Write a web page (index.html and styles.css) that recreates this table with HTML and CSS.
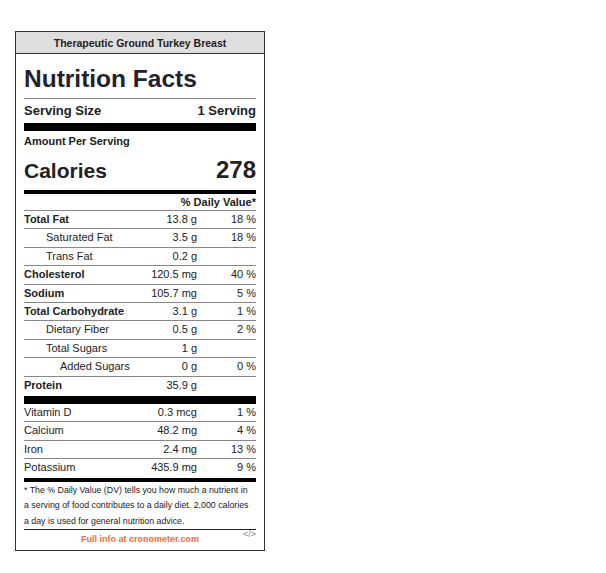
FILE: index.html
```html
<!DOCTYPE html>
<html>
<head>
<meta charset="utf-8">
<link rel="stylesheet" href="styles.css">
</head>
<body>
<div class="label">
  <div class="title">Therapeutic Ground Turkey Breast</div>
  <div class="inner">
    <div class="nf">Nutrition Facts</div>
    <div class="serving"><span>Serving Size</span><span>1 Serving</span></div>
    <div class="bar8"></div>
    <div class="aps">Amount Per Serving</div>
    <div class="cal"><span class="cal-l">Calories</span><span class="cal-v">278</span></div>
    <div class="bar4"></div>
    <div class="dvh">% Daily Value*</div>
    <div class="rows">
      <div class="row"><span class="n b">Total Fat</span><span class="a">13.8 g</span><span class="p">18 %</span></div>
      <div class="row"><span class="n i1">Saturated Fat</span><span class="a">3.5 g</span><span class="p">18 %</span></div>
      <div class="row"><span class="n i1">Trans Fat</span><span class="a">0.2 g</span><span class="p"></span></div>
      <div class="row"><span class="n b">Cholesterol</span><span class="a">120.5 mg</span><span class="p">40 %</span></div>
      <div class="row"><span class="n b">Sodium</span><span class="a">105.7 mg</span><span class="p">5 %</span></div>
      <div class="row"><span class="n b">Total Carbohydrate</span><span class="a">3.1 g</span><span class="p">1 %</span></div>
      <div class="row"><span class="n i1">Dietary Fiber</span><span class="a">0.5 g</span><span class="p">2 %</span></div>
      <div class="row"><span class="n i1">Total Sugars</span><span class="a">1 g</span><span class="p"></span></div>
      <div class="row"><span class="n i2">Added Sugars</span><span class="a">0 g</span><span class="p">0 %</span></div>
      <div class="row last"><span class="n b">Protein</span><span class="a">35.9 g</span><span class="p"></span></div>
    </div>
    <div class="bar8 mid"></div>
    <div class="rows minerals">
      <div class="row"><span class="n">Vitamin D</span><span class="a">0.3 mcg</span><span class="p">1 %</span></div>
      <div class="row"><span class="n">Calcium</span><span class="a">48.2 mg</span><span class="p">4 %</span></div>
      <div class="row"><span class="n">Iron</span><span class="a">2.4 mg</span><span class="p">13 %</span></div>
      <div class="row last"><span class="n">Potassium</span><span class="a">435.9 mg</span><span class="p">9 %</span></div>
    </div>
    <div class="bar4"></div>
    <div class="note">* The % Daily Value (DV) tells you how much a nutrient in a serving of food contributes to a daily diet. 2,000 calories a day is used for general nutrition advice.</div>
    <div class="foot"><span class="link">Full info at cronometer.com</span><span class="code">&lt;/&gt;</span></div>
  </div>
</div>
</body>
</html>
```
FILE: styles.css
```css
html, body { margin: 0; padding: 0; background: #fff; }
body { padding: 31px 0 0 15px; font-family: "Liberation Sans", Arial, sans-serif; color: #222; }
.label {
  width: 248px;
  border: 1px solid #333;
  box-sizing: content-box;
}
.title {
  background: #dedede;
  border-bottom: 1px solid #333;
  text-align: center;
  font-weight: bold;
  font-size: 10.5px;
  height: 21px;
  line-height: 22px;
  color: #222;
}
.inner { padding: 0 8px 0 8px; }
.nf {
  font-size: 24.5px;
  font-weight: bold;
  line-height: 30px;
  padding-top: 10px;
  padding-bottom: 4px;
  border-bottom: 1px solid #888;
  color: #22222e;
}
.serving {
  display: flex;
  justify-content: space-between;
  font-weight: bold;
  font-size: 13px;
  line-height: 22px;
  padding-top: 1px;
  padding-bottom: 1px;
}
.bar8 { height: 8px; background: #000; }
.bar8.mid { margin-top: 2px; }
.bar4 { height: 4px; background: #000; }
.aps { font-weight: bold; font-size: 11px; line-height: 14px; padding-top: 3px; }
.cal {
  display: flex;
  justify-content: space-between;
  align-items: baseline;
  font-weight: bold;
  line-height: 28px;
  padding-top: 8px;
  padding-bottom: 5px;
}
.cal-l { font-size: 21px; }
.cal-v { font-size: 24px; }
.dvh {
  text-align: right;
  font-weight: bold;
  font-size: 11px;
  line-height: 16px;
  padding-top: 0;
  border-bottom: 1px solid #888;
}
.row {
  display: grid;
  grid-template-columns: minmax(0, 1fr) 60px 59px;
  font-size: 11px;
  line-height: 17.4px;
  border-bottom: 1px solid #888;
  white-space: nowrap;
}
.row.last { border-bottom: none; }
.minerals { padding-bottom: 1px; }
.row .a, .row .p { text-align: right; }
.b { font-weight: bold; }
.i1 { padding-left: 22px; }
.i2 { padding-left: 36px; }
.note {
  font-size: 8.8px;
  line-height: 15.5px;
  padding: 1px 3px 0 0;
  border-bottom: 1px solid #222;
}
.foot {
  position: relative;
  text-align: center;
  height: 20px;
  line-height: 14px;
}
.link { color: #f26b3a; font-weight: bold; font-size: 9px; }
.code { position: absolute; right: 0; top: -3px; color: #888; font-size: 9px; }
```
